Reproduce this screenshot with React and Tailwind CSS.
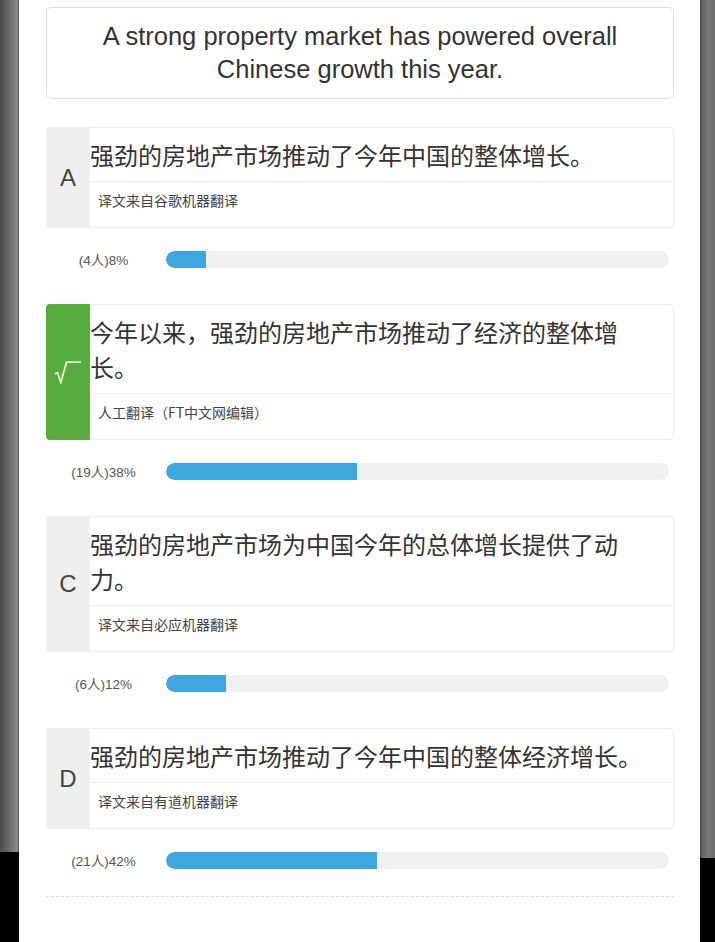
import React from 'react';

const options = [
  { key: 'A', text: '强劲的房地产市场推动了今年中国的整体增长。', source: '译文来自谷歌机器翻译', count: 4, pct: 8 },
  { key: 'B', text: '今年以来，强劲的房地产市场推动了经济的整体增长。', source: '人工翻译（FT中文网编辑）', count: 19, pct: 38, correct: true },
  { key: 'C', text: '强劲的房地产市场为中国今年的总体增长提供了动力。', source: '译文来自必应机器翻译', count: 6, pct: 12 },
  { key: 'D', text: '强劲的房地产市场推动了今年中国的整体经济增长。', source: '译文来自有道机器翻译', count: 21, pct: 42 },
];

const cjk = { fontFamily: '"Noto Sans CJK SC", "Noto Sans", sans-serif' };

function Check() {
  return (
    <svg width="28" height="23" viewBox="0 0 28 23" fill="none">
      <path d="M1 13 L3.5 11.5 L6.8 21.5 L12.5 1.2 L27 1.2" stroke="#e6f3dc" strokeWidth="1.8" strokeLinejoin="miter" />
    </svg>
  );
}

function Option({ opt }) {
  return (
    <div>
      <div className="flex rounded-[4px] border border-[#ececec]">
        <div
          className={
            'w-[44px] shrink-0 flex items-center justify-center rounded-l-[4px] -my-px -ml-px ' +
            (opt.correct ? 'bg-[#58ab3e]' : 'bg-[#efefef]')
          }
        >
          {opt.correct ? (
            <Check />
          ) : (
            <span className="text-[24px] text-[#444]" style={{ fontFamily: '"Liberation Sans", sans-serif' }}>
              {opt.key}
            </span>
          )}
        </div>
        <div className="flex-1 min-w-0">
          <div className="pr-[20px] py-[9px] text-[24px] leading-[35px] text-[#333]" style={cjk}>
            {opt.text}
          </div>
          <div className="border-t border-[#ececec] pl-[8px] pt-[9px] pb-[18px] text-[14px] leading-[18px] text-[#444]" style={cjk}>
            {opt.source}
          </div>
        </div>
      </div>
      <div className="mt-[23px] mb-[36px] flex items-center h-[17px]">
        <div
          className="w-[115px] shrink-0 pt-[3px] text-center text-[13.5px] text-[#555]"
          style={{ fontFamily: '"Liberation Sans", "Noto Sans CJK SC", sans-serif' }}
        >
          ({opt.count}人){opt.pct}%
        </div>
        <div className="ml-[5px] mr-[5px] flex-1 h-[17px] rounded-full bg-[#f1f1f1] overflow-hidden">
          <div className="h-full rounded-l-full bg-[#3ea7df]" style={{ width: opt.pct + '%' }} />
        </div>
      </div>
    </div>
  );
}

export default function App() {
  return (
    <div className="flex h-[942px] overflow-hidden">
      <div className="w-[19px] shrink-0 flex flex-col">
        <div className="h-[852px] bg-gradient-to-r from-[#4b4b4b] to-[#8c8c8c] border-r border-[#5c5c5c]" />
        <div className="flex-1 bg-black" />
      </div>
      <div className="flex-1 bg-white pl-[27px] pr-[26px] pt-[7px]">
        <div
          className="rounded-[5px] border border-[#dedede] py-[12px] text-center text-[25.5px] leading-[33px] text-[#333]"
          style={{ fontFamily: '"Liberation Sans", Arial, sans-serif' }}
        >
          A strong property market has powered overall
          <br />
          Chinese growth this year.
        </div>
        <div className="mt-[28px]">
          {options.map((o) => (
            <Option key={o.key} opt={o} />
          ))}
        </div>
        <div className="-mt-[9px] border-t border-dashed border-[#dcdcdc]" />
      </div>
      <div className="w-[15px] shrink-0 flex flex-col">
        <div className="h-[858px] bg-gradient-to-r from-[#5a5a5a] via-[#7a7a7a] to-[#6a6a6a] border-l border-[#4a4a4a]" />
        <div className="flex-1 bg-black" />
      </div>
    </div>
  );
}
